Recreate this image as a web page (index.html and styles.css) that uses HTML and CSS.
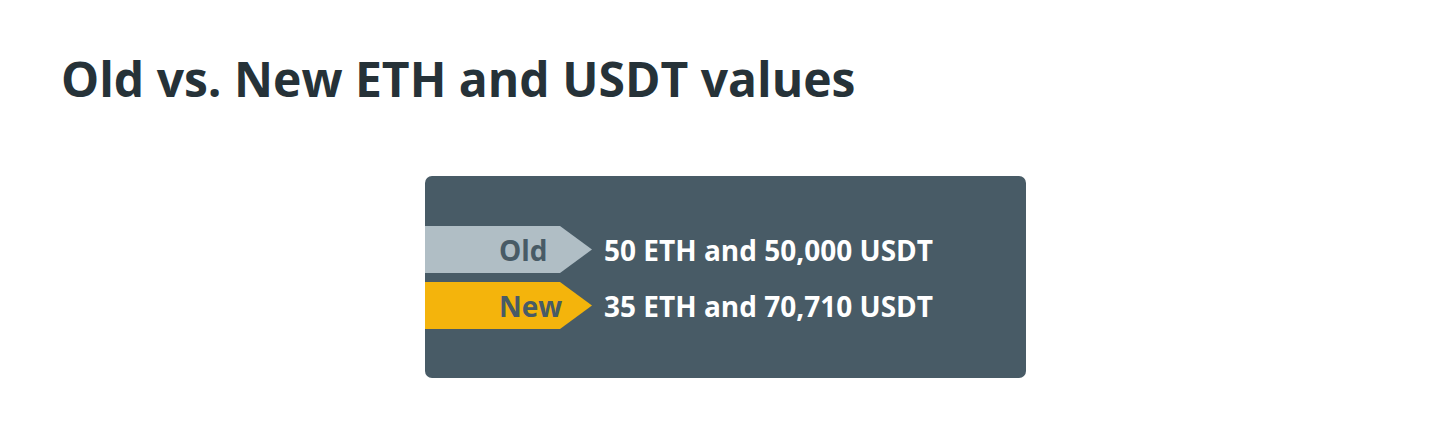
FILE: index.html
```html
<!DOCTYPE html>
<html>
<head>
<meta charset="utf-8">
<link rel="stylesheet" href="styles.css">
</head>
<body>
<div class="page">
  <h1 class="title">Old vs. New ETH and USDT values</h1>
  <div class="card">
    <div class="row">
      <div class="tag tag-old"><span class="tag-label">Old</span></div>
      <div class="value">50 ETH and 50,000 USDT</div>
    </div>
    <div class="row">
      <div class="tag tag-new"><span class="tag-label">New</span></div>
      <div class="value">35 ETH and 70,710 USDT</div>
    </div>
  </div>
</div>
</body>
</html>
```
FILE: styles.css
```css
html, body {
  margin: 0;
  padding: 0;
  background: #ffffff;
}
body {
  font-family: "Open Sans", "Liberation Sans", sans-serif;
  width: 1450px;
  height: 425px;
  overflow: hidden;
}
.page {
  padding: 49px 0 0 61px;
}
.title {
  margin: 0;
  font-size: 48px;
  font-weight: 700;
  line-height: 60px;
  color: #263238;
  letter-spacing: 0;
}
.card {
  margin: 67px 0 0 364px;
  width: 601px;
  height: 202px;
  box-sizing: border-box;
  background: #485b66;
  border-radius: 7px;
  padding-top: 50px;
  display: flex;
  flex-direction: column;
  gap: 9px;
}
.row {
  display: flex;
  align-items: center;
  height: 47px;
}
.tag {
  width: 167px;
  height: 47px;
  box-sizing: border-box;
  padding-left: 74px;
  display: flex;
  align-items: center;
  clip-path: polygon(0 0, 135px 0, 167px 50%, 135px 100%, 0 100%);
}
.tag-old {
  background: #b0bec5;
}
.tag-new {
  background: #f4b40c;
}
.tag-label {
  font-size: 28px;
  font-weight: 700;
  color: #485b66;
}
.value {
  margin-left: 12px;
  font-size: 28px;
  font-weight: 700;
  color: #ffffff;
}
```
